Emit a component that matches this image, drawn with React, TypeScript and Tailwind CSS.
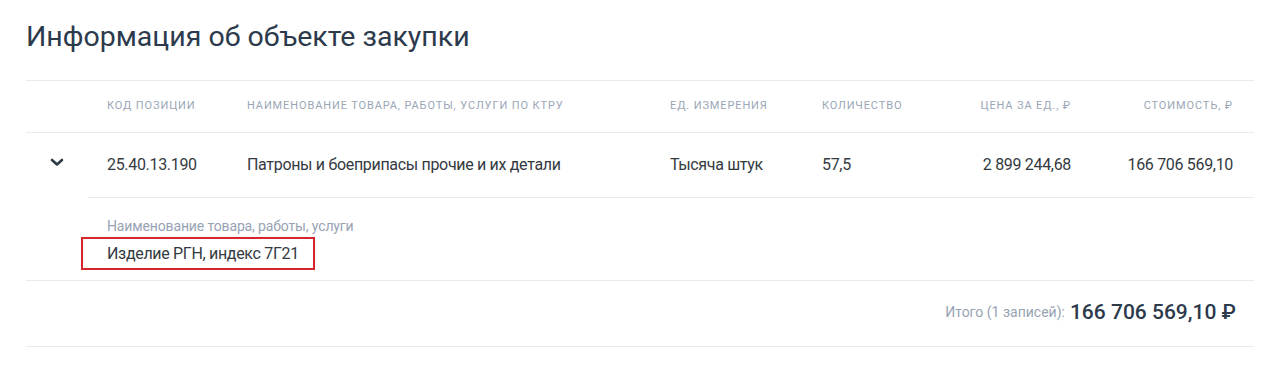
const cols = "grid grid-cols-[62px_140px_423px_152px_137px_150px_162px]";

function Chevron() {
  return (
    <svg width="14" height="9" viewBox="0 0 14 9" fill="none">
      <path d="M2 2l5 4.5L12 2" stroke="#2f3a48" strokeWidth="2.6" strokeLinecap="round" strokeLinejoin="round" />
    </svg>
  );
}

export default function App() {
  const head = "px-[19px] text-[11px] uppercase tracking-[0.08em] text-[#9aa6b6]";
  const cell = "px-[19px] text-[16px] tracking-[-0.02em] text-[#343a42]";

  return (
    <div className="h-[376px] bg-white px-[26px] font-['Roboto','Noto_Sans',sans-serif]">
      <h2 className="pt-[17px] pb-[23px] text-[28.5px] leading-[40px] font-normal text-[#2c3a4c]">Информация об объекте закупки</h2>

      <div className={`${cols} h-[53px] items-center border-t border-b border-[#e7eaee]`}>
        <div />
        <div className={head}>Код позиции</div>
        <div className={head}>Наименование товара, работы, услуги по КТРУ</div>
        <div className={head}>Ед. измерения</div>
        <div className={head}>Количество</div>
        <div className={`${head} text-right`}>Цена за ед., ₽</div>
        <div className={`${head} text-right`}>Стоимость, ₽</div>
      </div>

      <div className={`${cols} h-[64px] items-center`}>
        <div className="flex justify-center pb-[6px]"><Chevron /></div>
        <div className={cell}>25.40.13.190</div>
        <div className={cell}>Патроны и боеприпасы прочие и их детали</div>
        <div className={cell}>Тысяча штук</div>
        <div className={cell}>57,5</div>
        <div className={`${cell} text-right`}>2 899 244,68</div>
        <div className={`${cell} text-right`}>166 706 569,10</div>
      </div>

      <div className="ml-[62px] border-t border-[#e7eaee] pt-[19px] pb-[10px] pl-[19px]">
        <div className="text-[14px] leading-[18px] tracking-[-0.01em] text-[#97a3b4]">Наименование товара, работы, услуги</div>
        <div className="mt-[2px] ml-[-26px] w-fit border-2 border-[#d7262b] pl-[24px] pr-[14px] py-[3px] text-[16px] leading-[23px] tracking-[-0.02em] text-[#343a42]">
          Изделие РГН, индекс 7Г21
        </div>
      </div>

      <div className="flex h-[67px] items-center justify-end gap-[5px] border-t border-b border-[#e7eaee] pr-[18px] pb-[2px]">
        <span className="text-[14px] text-[#97a3b4]">Итого (1 записей):</span>
        <span className="text-[21px] font-medium text-[#2c3a4c]">166 706 569,10 ₽</span>
      </div>
    </div>
  );
}
